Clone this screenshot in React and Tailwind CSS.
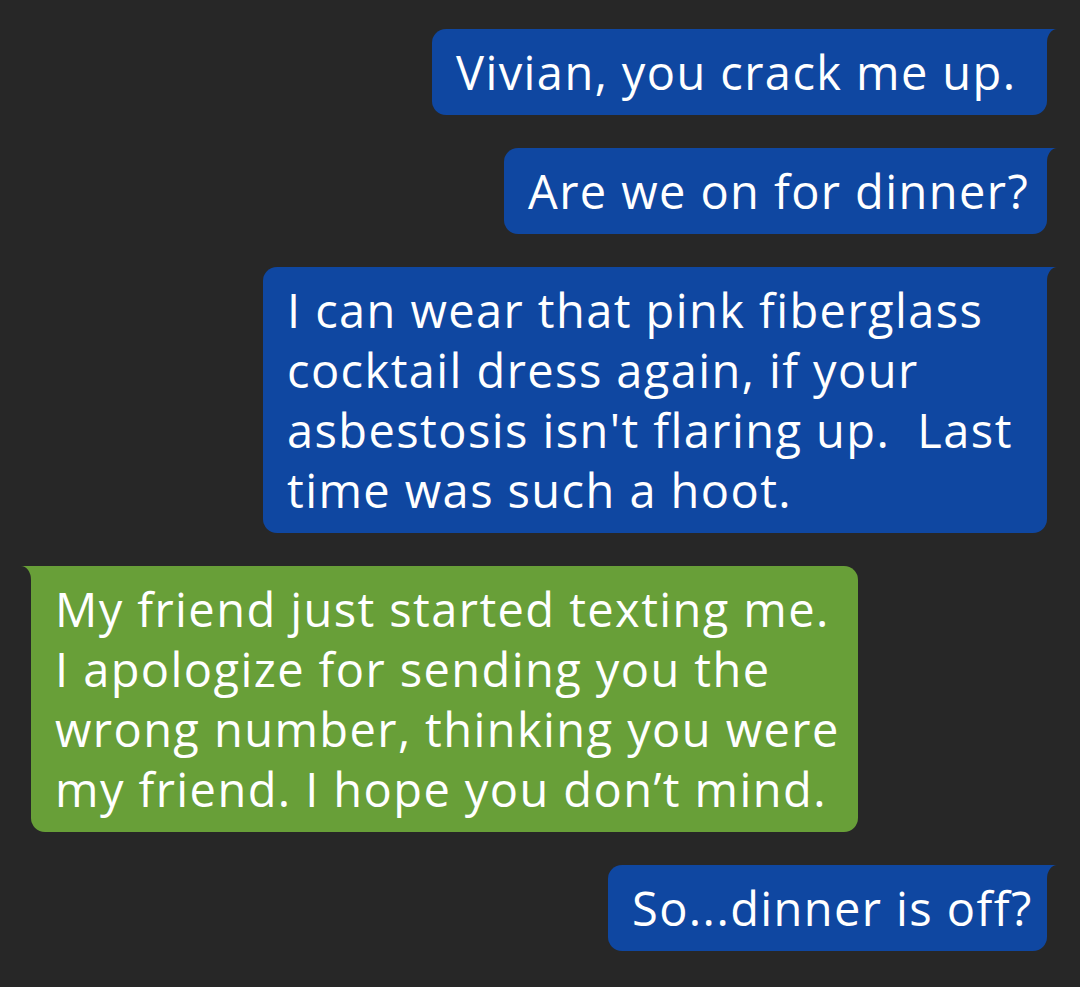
import React from "react";

function Tail({ side, color }) {
  if (side === "right") {
    return (
      <svg
        className="absolute top-0 -right-[10px]"
        width="10"
        height="14"
        viewBox="0 0 10 14"
      >
        <path d="M0 0 H10 A10 14 0 0 0 0 14 Z" fill={color} />
      </svg>
    );
  }
  return (
    <svg
      className="absolute top-0 -left-[10px]"
      width="10"
      height="14"
      viewBox="0 0 10 14"
    >
      <path d="M10 0 H0 A10 14 0 0 1 10 14 Z" fill={color} />
    </svg>
  );
}

function Out({ w, lines }) {
  return (
    <div className="flex justify-end">
      <div
        className={`relative bg-[#0f47a1] text-white rounded-[14px] rounded-tr-none px-6 py-[13px] ${w}`}
      >
        <Tail side="right" color="#0f47a1" />
        {lines.map((l, i) => (
          <div key={i} className="whitespace-nowrap leading-[60px] h-[60px]">
            {l}
          </div>
        ))}
      </div>
    </div>
  );
}

function In({ w, lines }) {
  return (
    <div className="flex justify-start">
      <div
        className={`relative bg-[#689f38] text-white rounded-[14px] rounded-tl-none px-6 py-[13px] ${w}`}
      >
        <Tail side="left" color="#689f38" />
        {lines.map((l, i) => (
          <div key={i} className="whitespace-nowrap leading-[60px] h-[60px]">
            {l}
          </div>
        ))}
      </div>
    </div>
  );
}

export default function App() {
  return (
    <div
      className="w-[1080px] h-[987px] bg-[#272727] flex flex-col gap-[33px] pt-[29px] pl-[31px] pr-[33px] overflow-hidden text-[47px] font-normal tracking-[0.03em]"
      style={{ fontFamily: "'Open Sans', 'Noto Sans', sans-serif" }}
    >
      <Out w="w-[615px]" lines={["Vivian, you crack me up."]} />
      <Out w="w-[543px]" lines={["Are we on for dinner?"]} />
      <Out
        w="w-[784px]"
        lines={[
          "I can wear that pink fiberglass",
          "cocktail dress again, if your",
          "asbestosis isn't flaring up.\u00a0 Last",
          "time was such a hoot.",
        ]}
      />
      <In
        w="w-[827px]"
        lines={[
          "My friend just started texting me.",
          "I apologize for sending you the",
          "wrong number, thinking you were",
          "my friend. I hope you don\u2019t mind.",
        ]}
      />
      <Out w="w-[439px]" lines={["So...dinner is off?"]} />
    </div>
  );
}
